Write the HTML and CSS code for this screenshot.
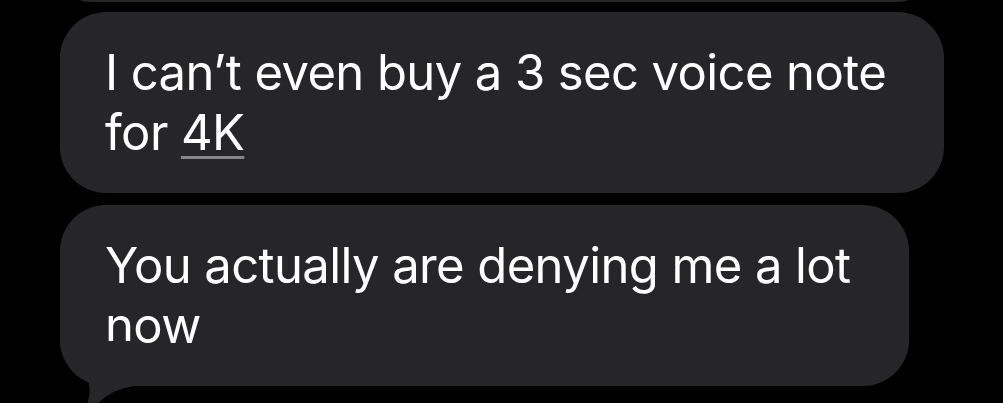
FILE: index.html
```html
<html>
<head>
<title>Messages</title>
<link rel="stylesheet" href="styles.css">
</head>
<body>
<div class="thread">
  <div class="bubble prev"></div>
  <div class="bubble">I can’t even buy a 3 sec voice note<br>for <span class="link">4K</span></div>
  <div class="bubble last">You actually are denying me a lot<br>now
    <svg class="tail" width="80" height="70" viewBox="0 0 80 70"><path d="M0 0 C0 18 12 28 22 33 C30 38 31 48 28 60 L26 70 L34 66 C44 56 56 47 75 45 L80 45 L80 0 Z"/></svg>
  </div>
</div>
</body>
</html>
```

FILE: styles.css
```css
html,body {margin:0; padding:0; background:#000; height:100%; overflow:hidden;}
.thread {display:flex; flex-direction:column; align-items:flex-start; gap:12px; padding:0 0 0 60px;}

.bubble {position:relative; background:#262628; color:#fff; border-radius:46px; padding:31px 58px 30px 45px; font:49px/60px Inter, "Noto Sans", sans-serif; letter-spacing:-0.6px;}
.bubble.prev {width:868px; height:60px; padding:0; margin:-58px 0 -2px;}
.bubble .link {text-decoration:underline; text-decoration-color:#85858a; text-decoration-thickness:3px; text-underline-offset:6px;}

.tail {position:absolute; left:0; bottom:-25px; fill:#262628;}
```
